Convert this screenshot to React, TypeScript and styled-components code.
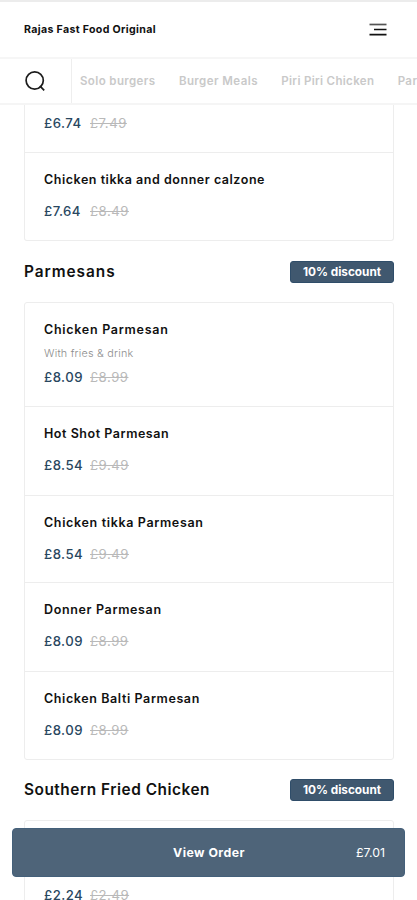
import React from "react";
import styled, { createGlobalStyle } from "styled-components";

const GlobalStyle = createGlobalStyle`
  *, *::before, *::after { box-sizing: border-box; }
  body { margin: 0; background: #fff; font-family: Inter, "Noto Sans", sans-serif; color: #111; }
`;

const Screen = styled.div`
  position: relative;
  display: flex;
  flex-direction: column;
  width: 417px;
  height: 900px;
  overflow: hidden;
  background: #fff;
`;

const Header = styled.header`
  flex: none;
  height: 59px;
  padding: 0 30px 0 24px;
  display: flex;
  align-items: center;
  justify-content: space-between;
  border-top: 2px solid #ececec;
  border-bottom: 2px solid #f6f6f6;
`;

const Brand = styled.h1`
  margin: 0;
  font-size: 10.6px;
  line-height: 16px;
  font-weight: 700;
  letter-spacing: 0.34px;
  white-space: nowrap;
`;

const MenuIcon = styled.svg`
  width: 18px;
  height: 14px;
  display: block;
`;

const CategoryBar = styled.nav`
  flex: none;
  height: 46px;
  display: flex;
  border-bottom: 2px solid #f5f5f5;
  overflow: hidden;
`;

const SearchCell = styled.div`
  flex: none;
  width: 72px;
  padding-left: 25px;
  display: flex;
  align-items: center;
  border-right: 1px solid #eee;
`;

const SearchIcon = styled.svg`
  width: 21px;
  height: 21px;
  display: block;
`;

const Categories = styled.div`
  flex: 1;
  min-width: 0;
  display: flex;
  align-items: center;
  gap: 23.4px;
  padding-left: 8px;
  overflow: hidden;
`;

const Category = styled.span<{ $track: number }>`
  flex: none;
  font-size: 11.5px;
  font-weight: 600;
  line-height: 16px;
  color: #c9c9c9;
  letter-spacing: ${(p) => p.$track}px;
`;

const Menu = styled.main`
  flex: 1;
  min-height: 0;
  overflow: hidden;
  padding: 0 23px 0 24px;
`;

const Card = styled.section<{ $continued?: boolean }>`
  border: 1px solid #ededed;
  border-top-width: ${(p) => (p.$continued ? 0 : 1)}px;
  border-radius: ${(p) => (p.$continued ? "0 0 3px 3px" : "3px")};
`;

const Item = styled.article<{ $height: number; $lead: number }>`
  height: ${(p) => p.$height}px;
  padding: ${(p) => p.$lead}px 19px 0;

  & + & { border-top: 1px solid #ededed; }
`;

const ItemName = styled.h3<{ $track: number }>`
  margin: 0 0 13px;
  font-size: 12.5px;
  line-height: 18px;
  font-weight: 600;
  letter-spacing: ${(p) => p.$track}px;
  white-space: nowrap;

  &:has(+ p) { margin-bottom: 7px; }
`;

const ItemNote = styled.p`
  margin: 0 0 7px;
  font-size: 10.8px;
  line-height: 15px;
  font-weight: 300;
  color: #8d8d8d;
  letter-spacing: 0.22px;
`;

const Prices = styled.div`
  display: flex;
  font-size: 13.2px;
  line-height: 18px;
`;

const Price = styled.span`
  width: 46px;
  font-weight: 500;
  color: #29475f;
  letter-spacing: 0.45px;
`;

const OldPrice = styled.s`
  color: #b9b9b9;
  letter-spacing: 0.5px;
  text-decoration-thickness: 1px;
`;

const SectionHeader = styled.div<{ $height: number }>`
  height: ${(p) => p.$height}px;
  display: flex;
  align-items: center;
  justify-content: space-between;
`;

const SectionTitle = styled.h2<{ $track: number }>`
  margin: 0;
  font-size: 15.4px;
  line-height: 22px;
  font-weight: 600;
  letter-spacing: ${(p) => p.$track}px;
`;

const Discount = styled.span`
  width: 104px;
  height: 22px;
  border-radius: 3px;
  background: #40586f;
  border: 1px solid #2f4d69;
  color: #fff;
  display: flex;
  align-items: center;
  justify-content: center;
  font-size: 11.8px;
  font-weight: 700;
`;

const OrderBar = styled.button`
  position: absolute;
  left: 12px;
  right: 12px;
  bottom: 23px;
  height: 49px;
  padding: 0 19px 0 20px;
  border: 1px solid #44607a;
  border-radius: 4px;
  background: #4e6479;
  color: #fff;
  font-family: inherit;
  display: grid;
  grid-template-columns: 1fr auto 1fr;
  align-items: center;
`;

const OrderLabel = styled.span`
  grid-column: 2;
  font-size: 12.3px;
  font-weight: 700;
  letter-spacing: 0.45px;
`;

const OrderTotal = styled.span`
  justify-self: end;
  font-size: 12.3px;
  font-weight: 400;
`;

type Dish = {
  name?: string;
  track?: number;
  note?: string;
  price: string;
  was: string;
  height: number;
  lead?: number;
};

const calzones: Dish[] = [
  { price: "£6.74", was: "£7.49", height: 47, lead: 9 },
  { name: "Chicken tikka and donner calzone", track: 0.53, price: "£7.64", was: "£8.49", height: 88 },
];

const parmesans: Dish[] = [
  { name: "Chicken Parmesan", track: 0.72, note: "With fries & drink", price: "£8.09", was: "£8.99", height: 103 },
  { name: "Hot Shot Parmesan", track: 0.54, price: "£8.54", was: "£9.49", height: 89 },
  { name: "Chicken tikka Parmesan", track: 0.65, price: "£8.54", was: "£9.49", height: 87 },
  { name: "Donner Parmesan", track: 0.65, price: "£8.09", was: "£8.99", height: 89 },
  { name: "Chicken Balti Parmesan", track: 0.6, price: "£8.09", was: "£8.99", height: 88 },
];

const southernFried: Dish[] = [{ price: "£2.24", was: "£2.49", height: 103, lead: 65 }];

function DishCard({ dishes, continued }: { dishes: Dish[]; continued?: boolean }) {
  return (
    <Card $continued={continued}>
      {dishes.map((dish, i) => (
        <Item key={i} $height={dish.height} $lead={dish.lead ?? 18}>
          {dish.name && <ItemName $track={dish.track ?? 0}>{dish.name}</ItemName>}
          {dish.note && <ItemNote>{dish.note}</ItemNote>}
          <Prices>
            <Price>{dish.price}</Price>
            <OldPrice>{dish.was}</OldPrice>
          </Prices>
        </Item>
      ))}
    </Card>
  );
}

export default function App() {
  return (
    <>
      <GlobalStyle />
      <Screen>
        <Header>
          <Brand>Rajas Fast Food Original</Brand>
          <MenuIcon viewBox="0 0 18 14" stroke="#111" strokeWidth="1.7">
            <path d="M0.5 1.5H17.5" stroke="#555" />
            <path d="M5 6.5H17.5M0.5 11.7H17.5" />
          </MenuIcon>
        </Header>
        <CategoryBar>
          <SearchCell>
            <SearchIcon viewBox="0 0 21 21" fill="none" stroke="#1c1c1c" strokeWidth="1.7">
              <circle cx="9.7" cy="9.5" r="8.6" />
              <path d="M14.8 14.9L19.2 19.3" />
            </SearchIcon>
          </SearchCell>
          <Categories>
            <Category $track={0.39}>Solo burgers</Category>
            <Category $track={0.43}>Burger Meals</Category>
            <Category $track={0.33}>Piri Piri Chicken</Category>
            <Category $track={0.4}>Parmesans</Category>
          </Categories>
        </CategoryBar>
        <Menu>
          <DishCard dishes={calzones} continued />
          <SectionHeader $height={61}>
            <SectionTitle $track={0.95}>Parmesans</SectionTitle>
            <Discount>10% discount</Discount>
          </SectionHeader>
          <DishCard dishes={parmesans} />
          <SectionHeader $height={60}>
            <SectionTitle $track={0.52}>Southern Fried Chicken</SectionTitle>
            <Discount>10% discount</Discount>
          </SectionHeader>
          <DishCard dishes={southernFried} />
        </Menu>
        <OrderBar>
          <OrderLabel>View Order</OrderLabel>
          <OrderTotal>£7.01</OrderTotal>
        </OrderBar>
      </Screen>
    </>
  );
}
